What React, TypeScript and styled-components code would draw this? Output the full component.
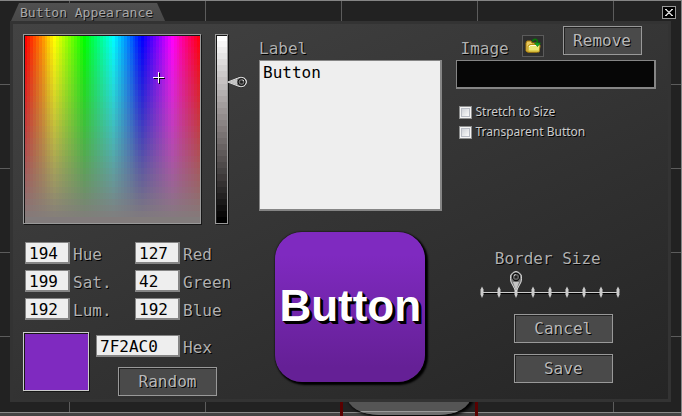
import React, { useState } from 'react';
import styled, { createGlobalStyle, css } from 'styled-components';

const mono = `"DejaVu Sans Mono", "Liberation Mono", monospace`;

/* Hard-edged colour bands, so that the picker shows discrete swatches. */
const bands = (direction: string, count: number, colour: (t: number) => string) => {
  const stops = Array.from({ length: count }, (_, i) => {
    const from = ((i / count) * 100).toFixed(2);
    const to = (((i + 1) / count) * 100).toFixed(2);
    return `${colour(i / (count - 1))} ${from}% ${to}%`;
  });
  return `linear-gradient(${direction}, ${stops.join(', ')})`;
};

const hueBands = bands('to right', 60, t => `hsl(${Math.round(t * 355)}, 100%, 50%)`);
const saturationBands = bands('to bottom', 31, t => `rgba(130, 124, 124, ${t.toFixed(3)})`);
const luminanceBands = bands('to bottom', 31, t => {
  const mix = (mid: number) => Math.round(t < 0.5 ? 255 - (255 - mid) * t * 2 : mid * (2 - t * 2));
  return `rgb(${mix(130)}, ${mix(123)}, ${mix(123)})`;
});

const GlobalStyle = createGlobalStyle`
  *, *::before, *::after { box-sizing: border-box; }
  body { margin: 0; background: #222; font-family: ${mono}; }
  button, input, textarea { font-family: inherit; margin: 0; }
`;

const Page = styled.main`
  position: relative;
  display: flex;
  flex-direction: column;
  min-height: 100vh;
  overflow: hidden;
  border-top: 1px solid #858585;
  border-right: 1px solid #858585;
  background-color: #222;
  background-image: linear-gradient(to right, #5c5c5c 1px, transparent 1px),
    linear-gradient(to bottom, #5c5c5c 1px, transparent 1px);
  background-size: 136px 84px;
  background-position: 69px 83px;
`;

const TitleRow = styled.header`
  display: flex;
  align-items: flex-end;
  justify-content: space-between;
  height: 20px;
  padding: 0 5px 0 11px;
`;

const TitleTab = styled.h1`
  margin: 0;
  height: 18px;
  padding: 0 12px 0 9px;
  font-size: 13px;
  line-height: 19px;
  font-weight: 400;
  color: #a8a8a8;
  text-shadow: 1px 1px #111;
  background: linear-gradient(#505050, #484848);
  clip-path: polygon(8px 0, calc(100% - 8px) 0, 100% 100%, 0 100%);
`;

const CloseButton = styled.button`
  align-self: center;
  display: flex;
  width: 14px;
  height: 13px;
  margin-top: 3px;
  padding: 0;
  border: 1px solid #9a9a9a;
  background: #000;
`;

const Dialog = styled.section`
  position: relative;
  z-index: 1;
  display: grid;
  grid-template-columns: 222px minmax(0, 183fr) minmax(0, 201fr);
  column-gap: 14px;
  margin: 0 10px 0 10px;
  padding: 10px 12px 3px 10px;
  border: 3px solid #333;
  background: linear-gradient(155deg, #434343, #343434 50%, #252525);
`;

const Column = styled.div`
  display: flex;
  flex-direction: column;
`;

const labelText = css`
  color: #b0b0b0;
  font-size: 16px;
  line-height: 22px;
  text-shadow: 1px 1px #000;
`;

const Row = styled.div<{ $gap?: number }>`
  display: flex;
  align-items: flex-start;
  gap: ${p => p.$gap ?? 0}px;
`;

const frame = css`
  border: 1px solid #999;
  box-shadow: 1px 1px #161616, inset 1px 1px #161616;
`;

const PickerRow = styled(Row)`
  height: 190px;
  align-items: stretch;
`;

const Spectrum = styled.div`
  ${frame}
  position: relative;
  width: 178px;
  background: ${saturationBands}, ${hueBands};
`;

const Crosshair = styled.svg`
  position: absolute;
  width: 12px;
  height: 12px;
  transform: translate(-5px, -5px);
`;

const Luminance = styled.div`
  ${frame}
  position: relative;
  width: 13px;
  background: ${luminanceBands};
`;

const VerticalRange = styled.input`
  position: absolute;
  inset: 0 -21px 0 0;
  width: 32px;
  height: 100%;
  opacity: 0;
  writing-mode: vertical-lr;
  direction: rtl;
`;

const SideThumb = styled.svg`
  position: absolute;
  left: 11px;
  width: 21px;
  height: 12px;
  margin-top: -6px;
`;

const sunken = css`
  border: 1px solid #858585;
  border-right-width: 2px;
  border-bottom-width: 2px;
  border-radius: 0;
  outline: none;
`;

const Fields = styled.div`
  display: grid;
  grid-template-columns: 110px 1fr;
  row-gap: 6px;
  margin: 18px 0 12px 2px;
`;

const Field = styled.label`
  ${labelText}
  display: flex;
  gap: 3px;
  height: 22px;
  line-height: 25px;
`;

const TextBox = styled.input<{ $wide?: boolean }>`
  ${sunken}
  width: ${p => (p.$wide ? 84 : 45)}px;
  height: 22px;
  padding: 1px 0 0 3px;
  background: #eee;
  color: #000;
  font-size: 16px;
`;

const Swatch = styled.div`
  ${frame}
  width: 66px;
  height: 59px;
  border-color: #ccc;
`;

const HexColumn = styled(Column)`
  flex: 1;
  padding-top: 3px;
  gap: 10px;
`;

const Button = styled.button<{ $compact?: boolean }>`
  width: ${p => (p.$compact ? 79 : 99)}px;
  height: 29px;
  padding: 0;
  border: 1px solid #999;
  background: #4a4a4a;
  box-shadow: inset 1px 1px #222;
  color: #b8b8b8;
  font-size: 16px;
  line-height: 26px;
  text-shadow: 1px 1px #000;
`;

const RandomButton = styled(Button)`
  margin-left: 22px;
`;

const LabelField = styled.label`
  ${labelText}
  display: flex;
  flex-direction: column;
  padding-top: 4px;
`;

const LabelArea = styled.textarea`
  ${sunken}
  display: block;
  width: 100%;
  height: 151px;
  padding: 2px 3px;
  resize: none;
  background: #eee;
  color: #000;
  font-size: 16px;
  line-height: 20px;
`;

const Preview = styled.div`
  display: flex;
  align-items: center;
  justify-content: center;
  align-self: center;
  width: 150px;
  height: 150px;
  margin-top: 21px;
  padding-bottom: 2px;
  border-radius: 27px;
  background: linear-gradient(#7f2ac0 15%, #652096 90%);
  box-shadow: 0 0 2px #000, 2px 2px 2px 1px #000;
  color: #fff;
  font: bold 44px/48px "Liberation Sans", Arial, sans-serif;
  text-shadow: 1px 1px #000, 2px 2px #000, 3px 3px #000;
`;

const ImageHeader = styled.div`
  display: flex;
  align-items: flex-start;
  height: 26px;
  padding-left: 5px;
`;

const ImageLabel = styled.label`
  ${labelText}
  flex: none;
  width: 61px;
  padding-top: 4px;
`;

const BrowseButton = styled.button`
  display: flex;
  align-items: center;
  justify-content: center;
  width: 22px;
  height: 22px;
  margin: 1px 19px 0 0;
  padding: 0;
  border: 1px solid #5b5b5b;
  background: #2e2e2e;
`;

const RemoveButton = styled(Button)`
  margin-top: -8px;
`;

const PathBox = styled.input`
  ${sunken}
  width: 100%;
  height: 29px;
  padding: 0 4px;
  background: #060606;
  color: #ccc;
  font-size: 16px;
`;

const Checks = styled.div`
  display: flex;
  flex-direction: column;
  gap: 4px;
  margin-top: 15px;
  padding-left: 3px;
`;

const CheckLabel = styled.label`
  display: flex;
  align-items: center;
  gap: 4px;
  height: 16px;
  color: #ccc;
  font: 12px/16px "Noto Sans", "Open Sans", sans-serif;
  text-shadow: 1px 1px #000;
`;

const CheckBox = styled.input`
  appearance: none;
  width: 13px;
  height: 13px;
  border: 1px solid #8e8f8f;
  background: linear-gradient(135deg, #c4c8cf, #f6f6f6 75%);
  box-shadow: inset 0 0 0 1px #f4f4f4, inset 0 0 0 2px #b8bcc4;
  &:checked { background: #555; }
`;

const BorderSize = styled.div`
  ${labelText}
  display: flex;
  flex-direction: column;
  align-items: center;
  margin-top: 108px;
  padding-right: 12px;
`;

const BorderLabel = styled.label`
  padding-right: 4px;
`;

const Scale = styled.div`
  position: relative;
  width: 140px;
  height: 30px;
  margin-top: 1px;
`;

const ScaleDrawing = styled.svg`
  display: block;
  width: 140px;
  height: 30px;
`;

const ScaleThumb = styled.svg`
  position: absolute;
  top: 0;
  width: 12px;
  height: 21px;
  margin-left: -6px;
`;

const ScaleRange = styled.input`
  position: absolute;
  inset: 0;
  width: 100%;
  height: 100%;
  opacity: 0;
`;

const Actions = styled.div`
  display: flex;
  flex-direction: column;
  align-items: center;
  gap: 11px;
  margin-top: 13px;
  padding-left: 15px;
`;

const StatusStrip = styled.footer`
  height: 4px;
  margin-top: auto;
  border-top: 1px solid #8a8a8a;
  background: #444;
`;

const Selection = styled.div`
  position: absolute;
  bottom: 0;
  left: calc(50% - 1px);
  width: 138px;
  height: 20px;
  padding: 0 4px 1px;
  border: solid #5a0000;
  border-width: 0 3px;
`;

const SelectedShape = styled.div`
  height: 100%;
  border-radius: 0 0 32px 32px / 0 0 19px 19px;
  background: linear-gradient(#555 15px, #9a9a9a 15px, #9a9a9a 16px, #707070 16px);
  box-shadow: 2px 1px 3px 1px #000;
`;

const SideMarker = ({ y }: { y: number }) => (
  <SideThumb viewBox="0 0 21 12" style={{ top: y }} aria-hidden="true">
    <path d="M0 6 L11 1 Q14 0 17 1 Q20 3 20 6 Q20 9 17 11 Q14 12 11 11 Z" fill="#111" />
    <path d="M1 6 L11 2 Q14 .5 17 2 Q19.5 4 19.5 6 Q19.5 8 17 10 Q14 11.5 11 10 Z" fill="#777" stroke="#ddd" strokeWidth="1.2" />
    <path d="M1 6 L10 3 V9 Z" fill="#c4c4c4" />
    <circle cx="14.5" cy="6" r="3.5" fill="#666" stroke="#0c0c0c" strokeWidth="1" />
    <circle cx="14.5" cy="6" r="1.5" fill="#222" />
    <path d="M15.5 4 l1.5 1" stroke="#eee" />
  </SideThumb>
);

const FolderIcon = () => (
  <svg width="16" height="16" viewBox="0 0 16 16" aria-hidden="true">
    <path d="M1 5 L2 3 H6 L7 5 H12 V14 H2 L1 13 Z" fill="#e8c860" stroke="#a87c08" />
    <path d="M3 14 L3 8 L5 6.5 H14.5 L15 8 L14 14 Z" fill="#ece878" stroke="#b88c10" />
    <path d="M4 9 L5.5 7.5 H14" stroke="#fffce0" fill="none" />
    <path d="M4 13 H13" stroke="#d6ba30" />
    <path d="M7.5 3.5 Q8 1 10.5 1.2 Q12.5 1.5 12.5 5" fill="none" stroke="#087808" strokeWidth="1.5" />
    <path d="M9.5 5 H15.5 L12.5 8.5 Z" fill="#18a828" stroke="#087808" strokeWidth=".7" />
  </svg>
);

const TICKS = [0, 1, 2, 3, 4, 5, 6, 7, 8];

export default function App() {
  const [hex, setHex] = useState('7F2AC0');
  const [lum, setLum] = useState(192);
  const [text, setText] = useState('Button');
  const [border, setBorder] = useState(2);

  const randomise = () =>
    setHex(Math.floor(Math.random() * 0xffffff).toString(16).toUpperCase().padStart(6, '0'));

  return (
    <>
      <GlobalStyle />
      <Page>
        <TitleRow>
          <TitleTab id="title">Button Appearance</TitleTab>
          <CloseButton aria-label="Close">
            <svg width="12" height="11" viewBox="0 0 12 11" aria-hidden="true">
              <path d="M2 2.5 H4 M8 2.5 H10 M2 8.5 H4 M8 8.5 H10 M3 2.5 L9 8.5 M9 2.5 L3 8.5" stroke="#ddd" strokeWidth="1.2" fill="none" />
            </svg>
          </CloseButton>
        </TitleRow>
        <Dialog role="dialog" aria-labelledby="title">
          <Column>
            <PickerRow $gap={14}>
              <Spectrum>
                <Crosshair viewBox="0 0 12 12" style={{ left: '76%', top: '22.4%' }} aria-hidden="true">
                  <path d="M1 6.5 H12 M6.5 1 V12" stroke="#000" />
                  <path d="M0 5.5 H11 M5.5 0 V11" stroke="#fff" />
                </Crosshair>
              </Spectrum>
              <Luminance>
                <SideMarker y={1 + Math.round((1 - lum / 255) * 187)} />
                <VerticalRange type="range" min={0} max={255} value={lum} aria-label="Luminance"
                  onChange={e => setLum(Number(e.target.value))} />
              </Luminance>
            </PickerRow>
            <Fields>
              <Field><TextBox defaultValue="194" />Hue</Field>
              <Field><TextBox defaultValue="127" />Red</Field>
              <Field><TextBox defaultValue="199" />Sat.</Field>
              <Field><TextBox defaultValue="42" />Green</Field>
              <Field><TextBox value={lum} onChange={e => setLum(Number(e.target.value) || 0)} />Lum.</Field>
              <Field><TextBox defaultValue="192" />Blue</Field>
            </Fields>
            <Row $gap={7}>
              <Swatch style={{ backgroundColor: `#${hex}` }} />
              <HexColumn>
                <Field><TextBox $wide value={hex} onChange={e => setHex(e.target.value)} />Hex</Field>
                <RandomButton onClick={randomise}>Random</RandomButton>
              </HexColumn>
            </Row>
          </Column>

          <Column>
            <LabelField>
              Label
              <LabelArea value={text} spellCheck={false} onChange={e => setText(e.target.value)} />
            </LabelField>
            <Preview>{text}</Preview>
          </Column>

          <Column>
            <ImageHeader>
              <ImageLabel htmlFor="image-path">Image</ImageLabel>
              <BrowseButton aria-label="Browse"><FolderIcon /></BrowseButton>
              <RemoveButton $compact>Remove</RemoveButton>
            </ImageHeader>
            <PathBox id="image-path" />
            <Checks>
              <CheckLabel><CheckBox type="checkbox" />Stretch to Size</CheckLabel>
              <CheckLabel><CheckBox type="checkbox" />Transparent Button</CheckLabel>
            </Checks>
            <BorderSize>
              <BorderLabel htmlFor="border-size">Border Size</BorderLabel>
              <Scale>
                <ScaleDrawing viewBox="0 0 140 30" aria-hidden="true">
                  <path d="M2 22.5 H140" stroke="#000" />
                  <path d="M1 21.5 H139" stroke="#ccc" />
                  {TICKS.map(i => (
                    <path key={i} d={`M${2 + i * 17} 15.5 l1.5 3 v5 l-1.5 3.5 l-1.5 -3.5 v-5 Z`} fill="#ccc" />
                  ))}
                </ScaleDrawing>
                <ScaleThumb viewBox="0 0 12 21" style={{ left: 2 + border * 17 }} aria-hidden="true">
                  <path d="M6 20.5 L1 11 Q0 8 .8 4 Q3 .5 6 .5 Q9 .5 11.2 4 Q12 8 11 11 Z" fill="#777" stroke="#ddd" />
                  <path d="M6 20 L3 11 H9 Z" fill="#c4c4c4" />
                  <circle cx="6" cy="6" r="3.6" fill="#666" stroke="#0c0c0c" strokeWidth="1.1" />
                  <circle cx="6" cy="6" r="1.5" fill="#222" />
                  <path d="M4 4.5 l1.5 -1" stroke="#eee" />
                </ScaleThumb>
                <ScaleRange id="border-size" type="range" min={0} max={8} value={border}
                  onChange={e => setBorder(Number(e.target.value))} />
              </Scale>
            </BorderSize>
            <Actions>
              <Button>Cancel</Button>
              <Button>Save</Button>
            </Actions>
          </Column>
        </Dialog>
        <StatusStrip />
        <Selection>
          <SelectedShape />
        </Selection>
      </Page>
    </>
  );
}
